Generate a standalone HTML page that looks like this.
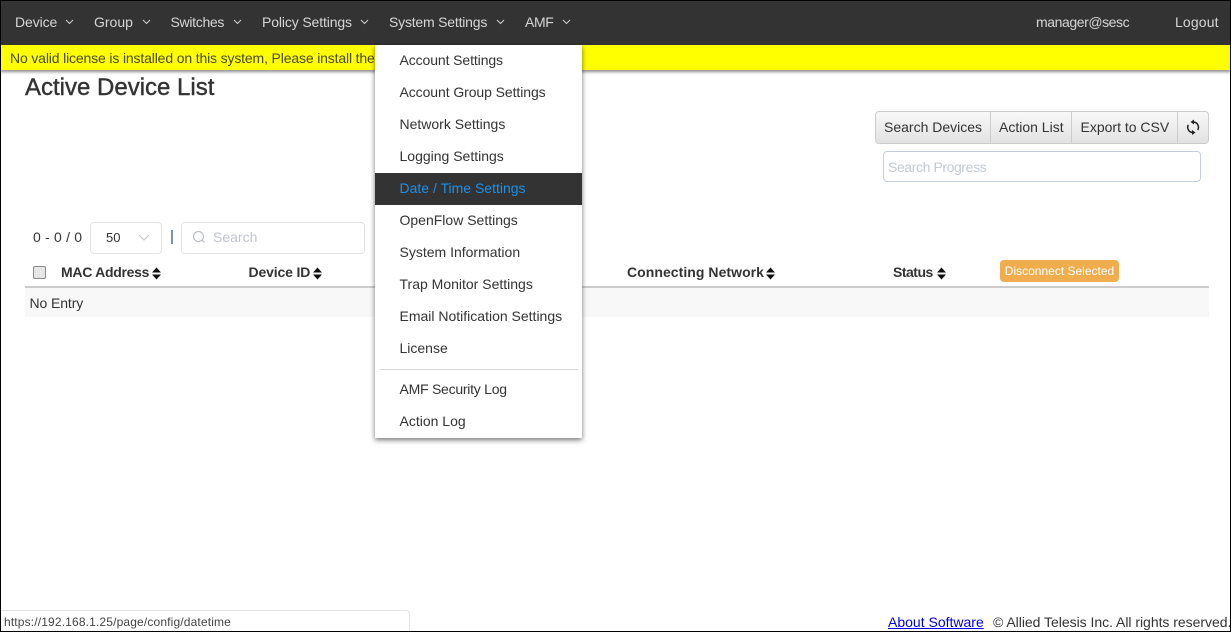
<!DOCTYPE html>
<html><head><meta charset="utf-8"><title>Active Device List</title>
<style>
html,body{margin:0;padding:0;width:1231px;height:632px;overflow:hidden;background:#fff}
body{font-family:"Liberation Sans",sans-serif;font-size:14px;color:#333;position:relative}
.a{position:absolute;white-space:nowrap;line-height:20px}
.nav{color:#d6d6d6;top:12px}
.chev{position:absolute;top:19px;width:9px;height:6px}
.m{left:399.500px;color:#333}
.b{font-weight:bold;color:#333;top:262px}
.sort{position:absolute;top:267px;width:9px;height:13px}
</style></head><body>
<div style="position:absolute;left:0;top:0;width:1231px;height:632px;box-sizing:border-box;border:1px solid #000;z-index:50;pointer-events:none"></div>
<div style="position:absolute;left:0;top:0;width:1231px;height:45px;background:#333"></div>
<div style="position:absolute;left:0;top:45px;width:1231px;height:25px;background:#ff0;box-shadow:0 2px 3px rgba(0,0,0,.45)"></div>
<div class="a" style="left:10px;top:48px;color:#4a4a1a;letter-spacing:-.15px">No valid license is installed on this system, Please install the</div>

<span class="a nav" style="left:15px;letter-spacing:-.1px">Device</span>
<span class="a nav" style="left:94px">Group</span>
<span class="a nav" style="left:170.500px;letter-spacing:-.3px">Switches</span>
<span class="a nav" style="left:262px;letter-spacing:-.13px">Policy Settings</span>
<span class="a nav" style="left:389px;letter-spacing:-.2px">System Settings</span>
<span class="a nav" style="left:525px;letter-spacing:-.4px">AMF</span>
<span class="a nav" style="left:1036px;letter-spacing:-.42px">manager@sesc</span>
<span class="a nav" style="left:1175px;letter-spacing:.15px">Logout</span>
<svg class="chev" style="left:65px" viewBox="0 0 9 6"><path d="M1 1l3.500 3.500L8 1" fill="none" stroke="#ccc" stroke-width="1.100"/></svg>
<svg class="chev" style="left:142px" viewBox="0 0 9 6"><path d="M1 1l3.500 3.500L8 1" fill="none" stroke="#ccc" stroke-width="1.100"/></svg>
<svg class="chev" style="left:233px" viewBox="0 0 9 6"><path d="M1 1l3.500 3.500L8 1" fill="none" stroke="#ccc" stroke-width="1.100"/></svg>
<svg class="chev" style="left:360px" viewBox="0 0 9 6"><path d="M1 1l3.500 3.500L8 1" fill="none" stroke="#ccc" stroke-width="1.100"/></svg>
<svg class="chev" style="left:496px" viewBox="0 0 9 6"><path d="M1 1l3.500 3.500L8 1" fill="none" stroke="#ccc" stroke-width="1.100"/></svg>
<svg class="chev" style="left:562px" viewBox="0 0 9 6"><path d="M1 1l3.500 3.500L8 1" fill="none" stroke="#ccc" stroke-width="1.100"/></svg>

<div class="a" style="left:25px;top:72px;font-size:24px;line-height:30px;color:#333;-webkit-text-stroke:.4px #333;transform:translateY(1px)">Active Device List</div>

<div style="position:absolute;left:875px;top:111px;width:332px;height:31px;border:1px solid #ccc;border-radius:4px;background:linear-gradient(#f8f8f8,#e2e2e2)"></div>
<div style="position:absolute;left:990px;top:112px;width:1px;height:31px;background:#ccc"></div>
<div style="position:absolute;left:1071px;top:112px;width:1px;height:31px;background:#ccc"></div>
<div style="position:absolute;left:1177px;top:112px;width:1px;height:31px;background:#ccc"></div>
<span class="a" style="left:884px;top:117px">Search Devices</span>
<span class="a" style="left:999px;top:117px">Action List</span>
<span class="a" style="left:1080.500px;top:117px">Export to CSV</span>
<svg style="position:absolute;left:1185px;top:119px" width="16" height="16" viewBox="0 0 16 16"><path d="M8.500 3A5.300 5.300 0 0 1 12.700 11M7.500 13.500A5.300 5.300 0 0 1 3.300 5.800" fill="none" stroke="#222" stroke-width="1.500"/><path d="M9 .5L5.500 3 9 5.500zM7 11l3.500 2.500L7 16z" fill="#222"/></svg>
<div style="position:absolute;left:883px;top:151px;width:316px;height:29px;border:1px solid #c5cfdc;border-radius:4px;background:#fff"></div>
<span class="a" style="left:888px;top:157px;color:#c3cad3;letter-spacing:-.4px">Search Progress</span>

<span class="a" style="left:33px;top:227px;letter-spacing:.2px">0 - 0 / 0</span>
<div style="position:absolute;left:90px;top:222px;width:70px;height:30px;border:1px solid #e2e4e8;border-radius:4px"></div>
<span class="a" style="left:106px;top:228px;font-size:13px">50</span>
<svg style="position:absolute;left:138px;top:234px" width="12" height="8" viewBox="0 0 12 8"><path d="M1 1l5 5 5-5" fill="none" stroke="#c4c8cc" stroke-width="1.100"/></svg>
<div style="position:absolute;left:171px;top:230px;width:2px;height:14px;background:#7f93a8"></div>
<div style="position:absolute;left:181px;top:222px;width:182px;height:30px;border:1px solid #e2e4e8;border-radius:4px"></div>
<svg style="position:absolute;left:192px;top:230px" width="14" height="14" viewBox="0 0 14 14"><circle cx="6.500" cy="6.500" r="5" fill="none" stroke="#b8bcc2" stroke-width="1.100"/><path d="M10 10l2.500 2.500" stroke="#b8bcc2" stroke-width="1.100"/></svg>
<span class="a" style="left:213px;top:227px;color:#c0c4cc">Search</span>

<div style="position:absolute;left:33px;top:266px;width:11px;height:11px;border:1px solid #8a8a8a;border-radius:2px;background:#e6e6e6"></div>
<span class="a b" style="left:61px;letter-spacing:-.28px">MAC Address</span>
<span class="a b" style="left:248.500px;letter-spacing:-.15px">Device ID</span>
<span class="a b" style="left:627px;letter-spacing:.05px">Connecting Network</span>
<span class="a b" style="left:893px;letter-spacing:-.5px">Status</span>
<svg class="sort" style="left:151.500px" viewBox="0 0 9 13"><path d="M0 5.500L4.500 .5 9 5.500zM0 7.500h9L4.500 12.500z" fill="#111"/></svg>
<svg class="sort" style="left:312.500px" viewBox="0 0 9 13"><path d="M0 5.500L4.500 .5 9 5.500zM0 7.500h9L4.500 12.500z" fill="#111"/></svg>
<svg class="sort" style="left:766px" viewBox="0 0 9 13"><path d="M0 5.500L4.500 .5 9 5.500zM0 7.500h9L4.500 12.500z" fill="#111"/></svg>
<svg class="sort" style="left:936.500px" viewBox="0 0 9 13"><path d="M0 5.500L4.500 .5 9 5.500zM0 7.500h9L4.500 12.500z" fill="#111"/></svg>
<div style="position:absolute;left:1000px;top:260px;width:119px;height:22px;background:#f0ad4e;border-radius:4px;color:#fff;font-size:12px;line-height:22px;text-align:center">Disconnect Selected</div>
<div style="position:absolute;left:25px;top:286px;width:1184px;height:2px;background:#ccc"></div>
<div style="position:absolute;left:25px;top:288px;width:1184px;height:29px;background:#f8f8f8"></div>
<span class="a" style="left:29.500px;top:293px;letter-spacing:-.1px">No Entry</span>

<div style="position:absolute;left:375px;top:45px;width:207px;height:393px;background:#fff;box-shadow:0 2px 5px rgba(0,0,0,.55);z-index:10">
<div style="position:absolute;left:0;top:128px;width:207px;height:32px;background:#333"></div>
<div style="position:absolute;left:5px;top:324px;width:198px;height:1px;background:#d8d8d8"></div>
</div>
<div style="position:absolute;left:0;top:0;z-index:11">
<span class="a m" style="top:50px;letter-spacing:-.1px">Account Settings</span>
<span class="a m" style="top:82px;letter-spacing:-.08px">Account Group Settings</span>
<span class="a m" style="top:114px">Network Settings</span>
<span class="a m" style="top:146px">Logging Settings</span>
<span class="a m" style="top:178px;color:#1e90e8">Date / Time Settings</span>
<span class="a m" style="top:210px">OpenFlow Settings</span>
<span class="a m" style="top:242px">System Information</span>
<span class="a m" style="top:274px">Trap Monitor Settings</span>
<span class="a m" style="top:306px">Email Notification Settings</span>
<span class="a m" style="top:338px">License</span>
<span class="a m" style="top:379px;letter-spacing:-.25px">AMF Security Log</span>
<span class="a m" style="top:411px">Action Log</span>
</div>

<div style="position:absolute;left:0;top:610px;width:410px;height:22px;box-sizing:border-box;border:1px solid #e4e4e4;border-left:0;border-bottom:0;border-radius:0 4px 0 0;background:#fff;z-index:12"></div>
<span class="a" style="left:4px;top:612px;font-size:12px;color:#444;z-index:13;letter-spacing:.15px">https://192.168.1.25/page/config/datetime</span>
<a class="a" href="#" style="left:888px;top:612px;color:#00e">About Software</a>
<span class="a" style="left:993px;top:612px;color:#333;letter-spacing:-.03px">© Allied Telesis Inc. All rights reserved.</span>
</body></html>
